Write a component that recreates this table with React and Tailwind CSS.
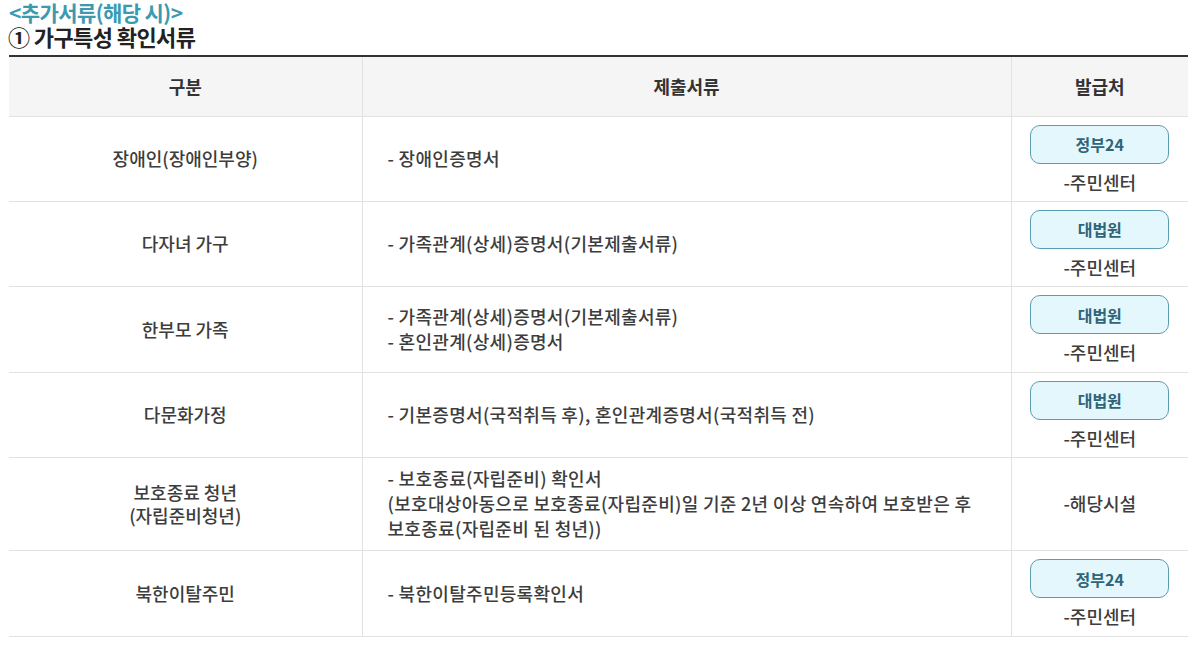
const rows = [
  { a: ["장애인(장애인부양)"], b: ["- 장애인증명서"], c: "정부24", h: "h-[85px]" },
  { a: ["다자녀 가구"], b: ["- 가족관계(상세)증명서(기본제출서류)"], c: "대법원", h: "h-[85px]" },
  { a: ["한부모 가족"], b: ["- 가족관계(상세)증명서(기본제출서류)", "- 혼인관계(상세)증명서"], c: "대법원", h: "h-[86px]" },
  { a: ["다문화가정"], b: ["- 기본증명서(국적취득 후), 혼인관계증명서(국적취득 전)"], c: "대법원", h: "h-[85px]" },
  {
    a: ["보호종료 청년", "(자립준비청년)"],
    b: [
      "- 보호종료(자립준비) 확인서",
      "(보호대상아동으로 보호종료(자립준비)일 기준 2년 이상 연속하여 보호받은 후",
      "보호종료(자립준비 된 청년))",
    ],
    c: null,
    h: "h-[93px]",
  },
  { a: ["북한이탈주민"], b: ["- 북한이탈주민등록확인서"], c: "정부24", h: "h-[86px]" },
];

export default function App() {
  return (
    <div
      className="w-[1201px] h-[647px] bg-white overflow-hidden"
      style={{ fontFamily: '"Noto Sans CJK KR", "Noto Sans", sans-serif' }}
    >
      <div className="pl-[9px]">
        <div className="text-[21px] font-bold leading-[24px] text-[#3b9ab0] tracking-[-0.6px]">
          &lt;추가서류(해당 시)&gt;
        </div>
        <div className="text-[22px] font-bold leading-[24px] text-[#222] tracking-[-0.6px] -ml-[1px]">
          ① 가구특성 확인서류
        </div>
      </div>
      <table className="ml-[9px] mt-[7px] w-[1179px] border-collapse border-t-2 border-t-[#333] table-fixed">
        <colgroup>
          <col className="w-[353px]" />
          <col className="w-[649px]" />
          <col className="w-[177px]" />
        </colgroup>
        <thead>
          <tr className="h-[60px] bg-[#f5f5f5]">
            <th className="text-[18px] font-bold text-[#333] border-b border-[#e2e2e2] border-r">구분</th>
            <th className="text-[18px] font-bold text-[#333] border-b border-[#e2e2e2] border-r">제출서류</th>
            <th className="text-[18px] font-bold text-[#333] border-b border-[#e2e2e2]">발급처</th>
          </tr>
        </thead>
        <tbody>
          {rows.map((r, i) => (
            <tr key={i} className={r.h}>
              <td className="border-b border-r border-[#e2e2e2] text-center text-[18px] font-medium text-[#3d3d3d] leading-[23px]">
                {r.a.map((t, j) => (
                  <div key={j}>{t}</div>
                ))}
              </td>
              <td className="border-b border-r border-[#e2e2e2] pl-[25px] text-[18px] font-medium text-[#3d3d3d] leading-[25px] tracking-[0.3px]">
                {r.b.map((t, j) => (
                  <div key={j}>{t}</div>
                ))}
              </td>
              <td className="border-b border-[#e2e2e2] text-center text-[18px] font-medium text-[#3d3d3d]">
                {r.c ? (
                  <div className="flex flex-col items-center gap-[6px] pt-[1px]">
                    <div className="w-[139px] h-[39px] rounded-[10px] border border-[#5a9db2] bg-[#e4f7fd] flex items-center justify-center text-[16px] font-bold text-[#2e6577]">
                      {r.c}
                    </div>
                    <div className="leading-[24px]">-주민센터</div>
                  </div>
                ) : (
                  <div>-해당시설</div>
                )}
              </td>
            </tr>
          ))}
        </tbody>
      </table>
    </div>
  );
}
